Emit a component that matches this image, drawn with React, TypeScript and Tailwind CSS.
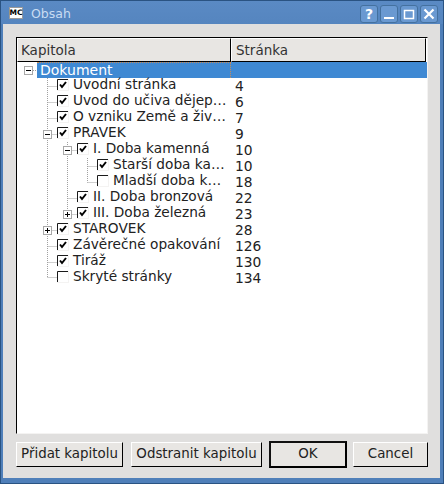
import React from 'react';

const font = { fontFamily: '"DejaVu Sans", sans-serif' };

type Row = { label: string; page?: string; level: number; checked?: boolean; toggle?: '+' | '-' };

const rows: Row[] = [
  { label: 'Uvodní stránka', page: '4', level: 1, checked: true },
  { label: 'Uvod do učiva dějep…', page: '6', level: 1, checked: true },
  { label: 'O vzniku Země a živ…', page: '7', level: 1, checked: true },
  { label: 'PRAVEK', page: '9', level: 1, checked: true, toggle: '-' },
  { label: 'I. Doba kamenná', page: '10', level: 2, checked: true, toggle: '-' },
  { label: 'Starší doba ka…', page: '10', level: 3, checked: true },
  { label: 'Mladší doba k…', page: '18', level: 3, checked: false },
  { label: 'II. Doba bronzová', page: '22', level: 2, checked: true },
  { label: 'III. Doba železná', page: '23', level: 2, checked: true, toggle: '+' },
  { label: 'STAROVEK', page: '28', level: 1, checked: true, toggle: '+' },
  { label: 'Závěrečné opakování', page: '126', level: 1, checked: true },
  { label: 'Tiráž', page: '130', level: 1, checked: true },
  { label: 'Skryté stránky', page: '134', level: 1, checked: false },
];

const Check = ({ on }: { on?: boolean }) => (
  <svg width="12" height="12" viewBox="0 0 12 12" className="shrink-0 block mt-[1px]">
    <rect x="0" y="0" width="12" height="12" fill="#f4f3f2" />
    <rect x="1" y="1" width="10" height="10" fill="#fff" />
    <path d="M0.5 11V0.5H11" fill="none" stroke="#1a1a1a" />
    {on && <path d="M3 5.5L5 8L9 3" fill="none" stroke="#000" strokeWidth="2" />}
  </svg>
);

const Toggle = ({ kind }: { kind: '+' | '-' }) => (
  <svg width="9" height="9" viewBox="0 0 9 9" className="block">
    <rect x="0.5" y="0.5" width="8" height="8" fill="#fff" stroke="#a8a8a8" />
    <path d="M2 4.5H7" stroke="#000" />
    {kind === '+' && <path d="M4.5 2V7" stroke="#000" />}
  </svg>
);

// dotted guides of the tree, coordinates relative to the tree body
const TreeLines = () => (
  <svg width="210" height="224" className="absolute left-0 top-0" fill="none" stroke="#a0a0a0" strokeDasharray="1 1">
    <path d="M16 8.5H20" />
    <path d="M30.5 16V215M30.5 24.5H40M30.5 40.5H40M30.5 56.5H40M30.5 72.5H40M30.5 168.5H40M30.5 184.5H40M30.5 200.5H40M30.5 215.5H40" />
    <path d="M50.5 80V156M50.5 88.5H60M50.5 136.5H60M50.5 152.5H60" />
    <path d="M70.5 96V120.5M70.5 104.5H80M70.5 120.5H80" />
  </svg>
);

const WinBtn = ({ children }: { children: React.ReactNode }) => (
  <div className="w-[18px] h-[18px] rounded-[3px] border border-[#44719f] bg-[#6a99d1] flex items-center justify-center">
    {children}
  </div>
);

const Btn = ({ label, className }: { label: string; className: string }) => (
  <div
    className={`flex items-center justify-center bg-[#e8e6e3] text-[13.4px] text-[#222] ${className}`}
  >
    {label}
  </div>
);

const raised = 'h-[25px] border border-t-white border-l-white border-r-black border-b-black';

export default function App() {
  return (
    <div style={font} className="w-[444px] h-[484px] bg-[#4f7fb9] border border-[#2a5382] flex flex-col overflow-hidden">
      <div className="h-[23px] flex items-start pl-[8px] pr-[5px] bg-gradient-to-b from-[#5a8ac4] to-[#5585bf]">
        <div className="mt-[6px] w-[14px] h-[12px] bg-white border border-[#9a9a9a] flex items-center justify-center text-[7.5px] font-bold text-black leading-none">
          MC
        </div>
        <div className="ml-[8px] mt-[5px] text-[12.5px] leading-[15px] text-[#c9dcf2]">Obsah</div>
        <div className="ml-auto mt-[4px] flex gap-[2px]">
          <WinBtn><span className="text-[14px] font-bold text-white leading-none">?</span></WinBtn>
          <WinBtn>
            <svg width="12" height="12" viewBox="0 0 12 12"><path d="M1 10H11" stroke="#fff" strokeWidth="2" /></svg>
          </WinBtn>
          <WinBtn>
            <svg width="12" height="12" viewBox="0 0 12 12"><path d="M1.5 2.5H10.5V10.5H1.5Z" fill="none" stroke="#fff" strokeWidth="1.5" /></svg>
          </WinBtn>
          <WinBtn>
            <svg width="12" height="12" viewBox="0 0 12 12"><path d="M1.5 1.5L10.5 10.5M10.5 1.5L1.5 10.5" stroke="#fff" strokeWidth="2.2" /></svg>
          </WinBtn>
        </div>
      </div>
      <div className="flex-1 ml-[2px] mr-[3px] mb-[5px] bg-[#e0dfde] flex flex-col pl-[13px] pr-[12px] pt-[13px] pb-[10px]">
        <div className="flex-1 flex flex-col bg-white border border-t-black border-l-black border-r-[#f4f3f2] border-b-[#f4f3f2]">
          <div className="h-[24px] flex pr-[1px] text-[13.5px] text-[#333]">
            <div className="w-[214px] flex items-center pl-[3px] bg-[#e8e6e3] border border-t-white border-l-white border-r-black border-b-black">
              Kapitola
            </div>
            <div className="flex-1 flex items-center pl-[4px] bg-[#e8e6e3] border border-t-white border-l-white border-r-black border-b-black">
              Stránka
            </div>
          </div>
          <div className="relative flex-1 text-[13.7px] text-[#222]">
            <TreeLines />
            <div className="relative h-[16px] flex leading-none">
              <div className="absolute left-[7px] top-[4px]"><Toggle kind="-" /></div>
              <div className="ml-[20px] w-[194px] h-[16px] pl-[3px] pb-[2px] bg-[#3f89d3] text-white flex items-center border-t border-r border-dotted border-[#c98a55] text-[14px]">
                Dokument
              </div>
              <div className="flex-1 h-[16px] bg-[#3f89d3]" />
            </div>
            {rows.map((r, i) => (
              <div key={i} className="relative h-[16px] flex items-start leading-[16px]">
                {r.toggle && (
                  <div className={`absolute top-[4px] ${r.level === 1 ? 'left-[26px]' : 'left-[46px]'}`}>
                    <Toggle kind={r.toggle} />
                  </div>
                )}
                <div className={`w-[218px] flex items-start gap-[4px] whitespace-nowrap ${r.level === 1 ? 'pl-[40px]' : r.level === 2 ? 'pl-[60px]' : 'pl-[80px]'}`}>
                  <Check on={r.checked} />
                  <span className="-mt-[2px]">{r.label}</span>
                </div>
                <span className="text-[13.8px]">{r.page}</span>
              </div>
            ))}
          </div>
        </div>
        <div className="flex items-center mt-[7px]">
          <Btn label="Přidat kapitolu" className={`w-[107px] ${raised}`} />
          <Btn label="Odstranit kapitolu" className={`w-[131px] ml-[8px] ${raised}`} />
          <Btn label="OK" className="w-[78px] h-[27px] ml-[7px] border-2 border-black border-t-[#111] border-l-[#111]" />
          <Btn label="Cancel" className={`w-[75px] ml-[6px] ${raised}`} />
        </div>
      </div>
    </div>
  );
}
